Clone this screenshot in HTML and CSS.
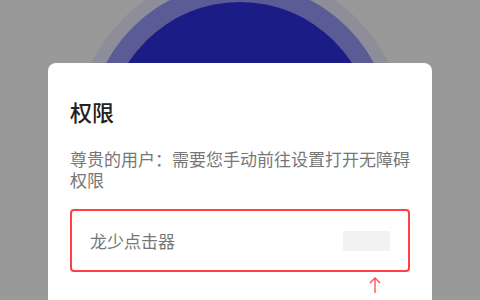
FILE: index.html
```html
<!DOCTYPE html>
<html lang="zh-CN">
<head>
    <meta charset="UTF-8">
    <meta name="viewport" content="width=device-width, initial-scale=1.0">
    <title>权限</title>
    <link rel="stylesheet" href="styles.css">
</head>
<body>
    <div class="stage">
        <div class="ring outer"></div>
        <div class="ring middle"></div>
        <div class="ring inner"></div>
        <div class="dialog">
            <h2 class="title">权限</h2>
            <p class="des">尊贵的用户：需要您手动前往设置打开无障碍权限</p>
            <div class="item">
                <span class="name">龙少点击器</span>
                <span class="switch"></span>
            </div>
            <div class="hint">
                <svg width="12" height="16" viewBox="0 0 12 16">
                    <path d="M6 1 V16 M1 6 L6 1 L11 6" fill="none" stroke="#ff4a4a" stroke-width="1.3"/>
                </svg>
            </div>
        </div>
    </div>
</body>
</html>
```

FILE: styles.css
```css
* {
    margin: 0;
    padding: 0;
}

body {
    background: #999;
    font-family: "Noto Sans CJK SC", "Noto Sans", sans-serif;
    overflow: hidden;
}

.stage {
    position: relative;
    width: 480px;
    height: 300px;
    overflow: hidden;
}

/* 背景圆环 */
.ring {
    position: absolute;
    left: 50%;
    top: 135px;
    border-radius: 50%;
    transform: translate(-50%, -50%);
}
.ring.outer {
    width: 330px;
    height: 330px;
    background: #8e8e9a;
}
.ring.middle {
    width: 304px;
    height: 304px;
    background: #5b5b95;
}
.ring.inner {
    width: 266px;
    height: 266px;
    background: #1c1c87;
}

.dialog {
    position: relative;
    margin: 63px 48px 0;
    padding: 33px 22px 0;
    height: 260px;
    background: #fff;
    border-radius: 8px;
}

.dialog .title {
    font-size: 22px;
    line-height: 30px;
    font-weight: 500;
    color: #222;
}

.dialog .des {
    margin-top: 22px;
    font-size: 17px;
    line-height: 21px;
    color: #777;
}

.dialog .item {
    display: flex;
    align-items: center;
    justify-content: space-between;
    margin-top: 19px;
    height: 59px;
    padding: 0 18px;
    border: 2px solid #ff4040;
    border-radius: 4px;
}

.dialog .item .name {
    font-size: 17px;
    color: #777;
}

.dialog .item .switch {
    width: 47px;
    height: 20px;
    background: #f2f2f2;
}

.dialog .hint {
    display: flex;
    justify-content: flex-end;
    padding: 5px 29px 0 0;
}
```
